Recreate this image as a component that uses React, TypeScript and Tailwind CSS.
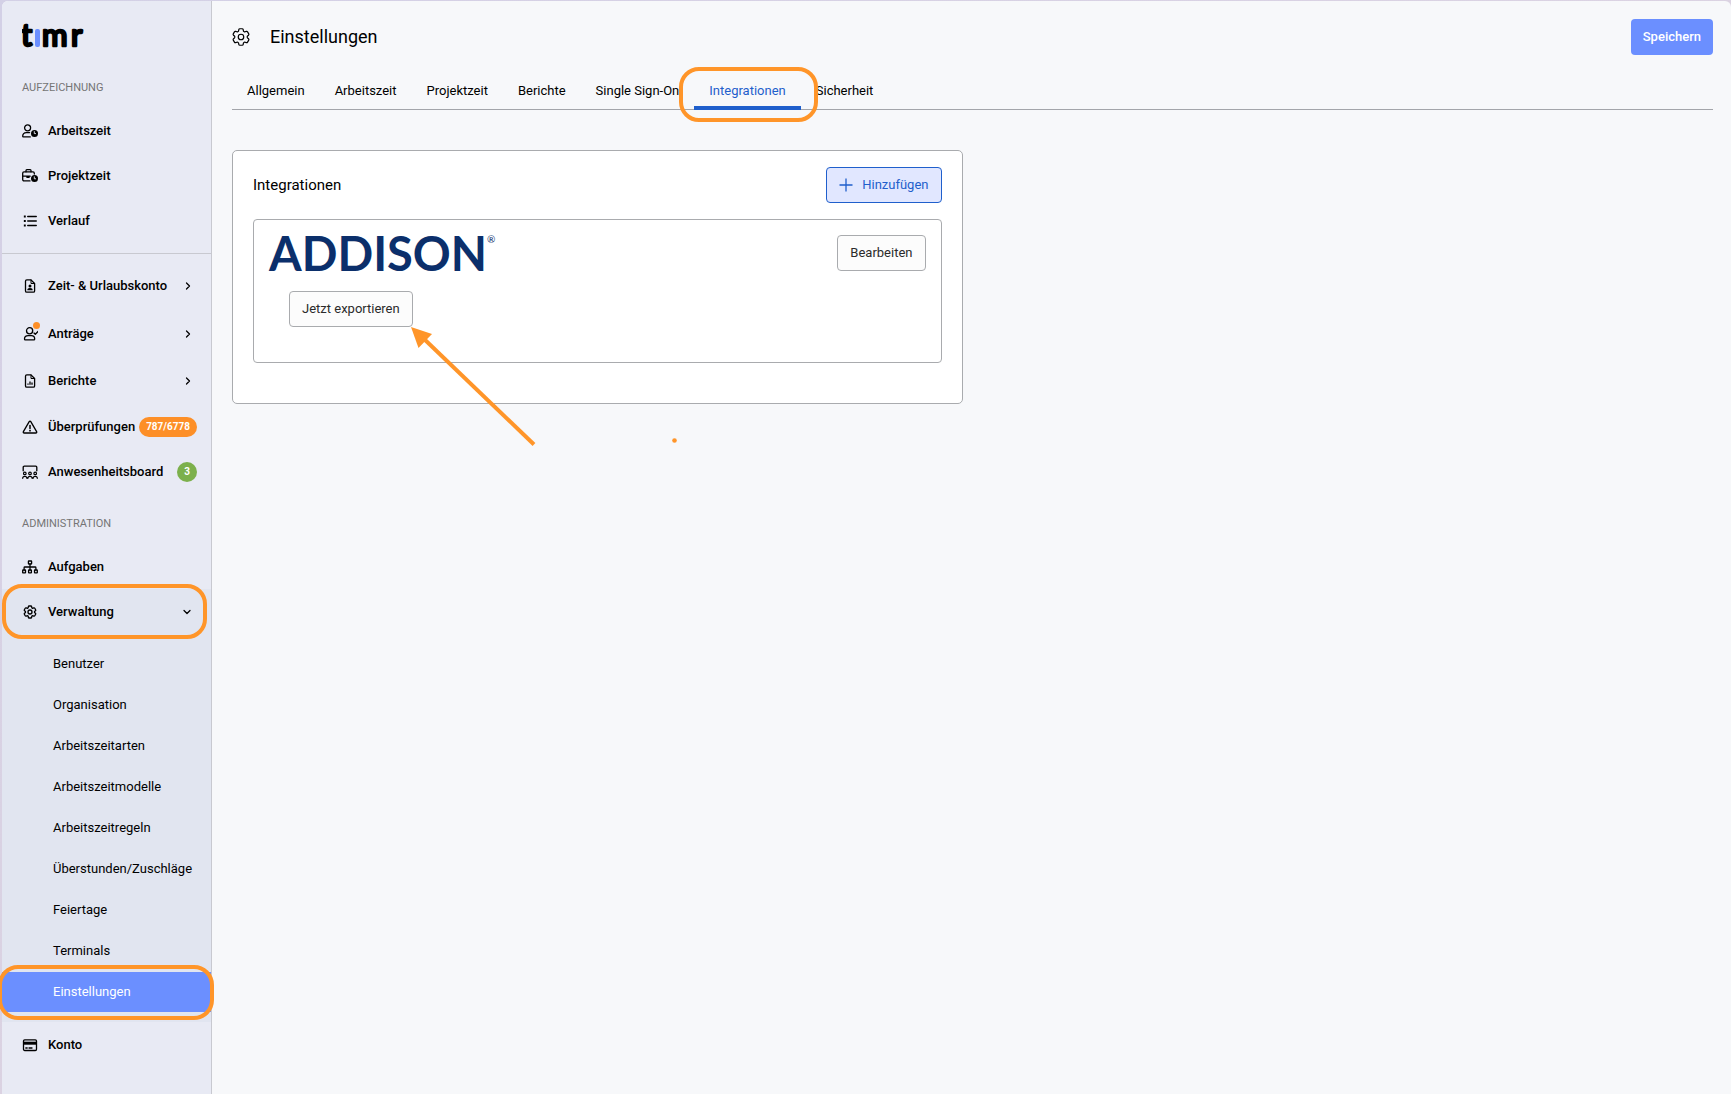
import type { ReactNode } from "react";
import { HiOutlineCog6Tooth } from "react-icons/hi2";
import { ChevronDown, ChevronRight } from "lucide-react";

function Icon({ children }: { children: ReactNode }) {
  return (
    <svg
      viewBox="0 0 16 16"
      className="size-4 shrink-0"
      fill="none"
      stroke="currentColor"
      strokeWidth="1.3"
      strokeLinecap="round"
      strokeLinejoin="round"
      aria-hidden="true"
    >
      {children}
    </svg>
  );
}

const icons = {
  userClock: (
    <Icon>
      <circle cx="5.6" cy="4.8" r="3" />
      <path d="M7.6 9.6H4.2C2 9.6.7 11.2.7 13.2c0 .5.2.7.6.7h7" />
      <circle cx="12.5" cy="10.4" r="3.5" fill="currentColor" stroke="none" />
      <path d="M12.3 8.6v2h1.3" stroke="#e8eaf4" strokeWidth="0.9" />
    </Icon>
  ),
  briefcaseClock: (
    <Icon>
      <path d="M8 12.9H2c-.8 0-1.3-.5-1.3-1.3V5.2c0-.8.5-1.3 1.3-1.3h9c.8 0 1.3.5 1.3 1.3v.8" />
      <path d="M4 3.8V2.6c0-.5.4-.9.9-.9h3.2c.5 0 .9.4.9.9v1.2M.8 8.2h7.4M5 8.2v1.2h2V8.2" />
      <circle cx="12.5" cy="10.6" r="3.5" fill="currentColor" stroke="none" />
      <path d="M12.3 8.8v2h1.3" stroke="#e8eaf4" strokeWidth="0.9" />
    </Icon>
  ),
  list: (
    <Icon>
      <path d="M5.7 3.5h8.6M5.7 8h8.6M5.7 12.5h8.6" />
      <path d="M2.8 3.5h.01M2.8 8h.01M2.8 12.5h.01" strokeWidth="1.9" strokeLinecap="square" />
    </Icon>
  ),
  fileUser: (
    <Icon>
      <path d="M9 1.9H4.8c-.8 0-1.3.5-1.3 1.3v9.7c0 .8.5 1.3 1.3 1.3h6.5c.8 0 1.3-.5 1.3-1.3V5.5z" />
      <path d="M9 2v3.5h3.4" strokeWidth="1" />
      <circle cx="8" cy="7.9" r="1.5" fill="currentColor" stroke="none" />
      <path d="M5.3 12.3c0-1.6.9-2.4 2.7-2.4s2.7.8 2.7 2.4z" fill="currentColor" stroke="none" />
    </Icon>
  ),
  userCheck: (
    <Icon>
      <circle cx="7.6" cy="4.8" r="3.1" />
      <path d="M9.4 9.7H6.2c-2.2 0-3.7 1.3-3.7 3.3 0 .6.3.9.8.9h8.6c.5 0 .8-.3.8-.9 0-2-1.3-3.3-3.3-3.3z" />
      <path d="m12 7.1 1.3 1.2 3-3" strokeWidth="1.4" />
    </Icon>
  ),
  fileChart: (
    <Icon>
      <path d="M9 1.9H4.8c-.8 0-1.3.5-1.3 1.3v9.7c0 .8.5 1.3 1.3 1.3h6.5c.8 0 1.3-.5 1.3-1.3V5.5z" />
      <path d="M9 2v3.5h3.4" strokeWidth="1" />
      <path d="M6 11.8v-1.2M8 11.8V8.4M10 11.8V9.5" strokeLinecap="butt" />
    </Icon>
  ),
  warning: (
    <Icon>
      <path d="M7.2 2.7 1.4 12.6c-.4.7 0 1.4.8 1.4h11.6c.8 0 1.2-.7.8-1.4L8.8 2.7c-.4-.6-1.2-.6-1.6 0z" />
      <path d="M8 6.4v3.2" strokeWidth="1.5" />
      <path d="M8 11.7h.01" strokeWidth="1.8" />
    </Icon>
  ),
  board: (
    <Icon>
      <path d="M1.2 6.8V3.3c0-.7.4-1.1 1.1-1.1h11.4c.7 0 1.1.4 1.1 1.1v3.5" />
      <circle cx="2.8" cy="9.4" r="1.3" strokeWidth="1.2" />
      <circle cx="8" cy="9.4" r="1.3" strokeWidth="1.2" />
      <circle cx="13.2" cy="9.4" r="1.3" strokeWidth="1.2" />
      <path
        d="M.7 14.3c0-1.3.8-1.9 2.1-1.9s2.1.6 2.1 1.9M5.9 14.3c0-1.3.8-1.9 2.1-1.9s2.1.6 2.1 1.9M11.1 14.3c0-1.3.8-1.9 2.1-1.9s2.1.6 2.1 1.9"
        strokeWidth="1.2"
      />
    </Icon>
  ),
  sitemap: (
    <Icon>
      <rect x="6.4" y="2" width="3.2" height="3" rx="0.4" />
      <rect x="0.7" y="11" width="2.8" height="2.8" rx="0.4" />
      <rect x="6.6" y="11" width="2.8" height="2.8" rx="0.4" />
      <rect x="12.5" y="11" width="2.8" height="2.8" rx="0.4" />
      <path d="M8 5v6M2.1 11V8.8c0-.5.3-.8.8-.8h10.2c.5 0 .8.3.8.8V11" />
    </Icon>
  ),
  gear: <HiOutlineCog6Tooth className="size-4 shrink-0" strokeWidth={2} aria-hidden="true" />,
  card: (
    <Icon>
      <rect x="1.5" y="2.9" width="13" height="10.6" rx="1.2" />
      <path d="M1.5 6.2h13" strokeWidth="3" strokeLinecap="butt" />
      <path d="M3.8 11h1.4M7 11h3" />
    </Icon>
  ),
};

function NavItem({
  icon,
  label,
  height = "h-[45px]",
  children,
}: {
  icon: ReactNode;
  label: string;
  height?: string;
  children?: ReactNode;
}) {
  return (
    <a href="#" className={`${height} flex items-center pr-[14px] pl-5 font-medium`}>
      {icon}
      <span className="ml-[10px] whitespace-nowrap">{label}</span>
      <span className="ml-auto flex items-center">{children}</span>
    </a>
  );
}

function Highlight({ className }: { className: string }) {
  return (
    <span
      aria-hidden="true"
      className={`pointer-events-none absolute z-10 rounded-[20px] border-4 border-[#ff9529] ${className}`}
    />
  );
}

function TimrLogo() {
  return (
    <svg viewBox="0 0 70 40" className="h-10 w-[70px]" role="img" aria-label="timr">
      <g
        className="font-[Lato] text-[31px] font-normal"
        stroke="#000"
        strokeWidth="2.6"
        strokeLinejoin="round"
      >
        <text x="-1" y="31">t</text>
        <text x="20" y="31">m</text>
        <text x="49" y="31">r</text>
      </g>
      <rect x="13" y="14" width="5" height="18" rx="2" fill="#6b8fff" />
    </svg>
  );
}

const adminLinks = [
  "Benutzer",
  "Organisation",
  "Arbeitszeitarten",
  "Arbeitszeitmodelle",
  "Arbeitszeitregeln",
  "Überstunden/Zuschläge",
  "Feiertage",
  "Terminals",
  "Einstellungen",
];

function Sidebar() {
  const chevron = <ChevronRight className="mr-[3px] size-3" strokeWidth={2.5} aria-hidden="true" />;

  return (
    <aside className="w-[210px] shrink-0 rounded-tl-md border-r border-[#c8c9d0] bg-[#e8eaf4]">
      <div className="flex pt-[14px] pl-5">
        <TimrLogo />
      </div>
      <nav>
        <h2 className="mt-[25px] pl-5 text-[11px] leading-4 text-[#757575]">AUFZEICHNUNG</h2>
        <div className="mt-3 border-b border-[#c8c9d0] pb-[10px]">
          <NavItem icon={icons.userClock} label="Arbeitszeit" />
          <NavItem icon={icons.briefcaseClock} label="Projektzeit" />
          <NavItem icon={icons.list} label="Verlauf" />
        </div>
        <div className="pt-2">
          <NavItem icon={icons.fileUser} label="Zeit- & Urlaubskonto" height="h-[47px]">
            {chevron}
          </NavItem>
          <NavItem
            icon={
              <span className="relative">
                {icons.userCheck}
                <span className="absolute -top-1 -right-0.5 size-[7px] rounded-full bg-[#fd8f27]" />
              </span>
            }
            label="Anträge"
            height="h-[49px]"
          >
            {chevron}
          </NavItem>
          <NavItem icon={icons.fileChart} label="Berichte" height="h-[46px]">
            {chevron}
          </NavItem>
          <NavItem icon={icons.warning} label="Überprüfungen">
            <span className="h-5 rounded-full bg-[#fd8f27] px-[7px] text-[10px] leading-5 font-bold text-white">
              787/6778
            </span>
          </NavItem>
          <NavItem icon={icons.board} label="Anwesenheitsboard">
            <span className="size-5 rounded-full bg-[#7cb04c] text-center text-[10px] leading-5 font-bold text-white">
              3
            </span>
          </NavItem>
        </div>

        <h2 className="mt-[22px] mb-3 pl-5 text-[11px] leading-4 text-[#757575]">ADMINISTRATION</h2>
        <NavItem icon={icons.sitemap} label="Aufgaben" />
        <div className="bg-[#e1e5f0] pb-[10px]">
          <div className="relative">
            <NavItem icon={icons.gear} label="Verwaltung">
              <ChevronDown className="mr-1 size-3" strokeWidth={2.5} aria-hidden="true" />
            </NavItem>
            <Highlight className="-top-[5px] right-1 -bottom-[5px] left-0" />
          </div>
          <ul className="pt-[9px]">
            {adminLinks.map((label) => {
              const active = label === "Einstellungen";
              return (
                <li key={label} className="relative pt-px">
                  <a
                    href="#"
                    aria-current={active ? "page" : undefined}
                    className={`block pl-[51px] leading-10 ${active ? "bg-[#6b8fff] text-white" : ""}`}
                  >
                    {label}
                  </a>
                  {active && <Highlight className="-top-[6px] -right-[3px] -bottom-2 -left-1" />}
                </li>
              );
            })}
          </ul>
        </div>
        <NavItem icon={icons.card} label="Konto" />
      </nav>
    </aside>
  );
}

const tabs = [
  "Allgemein",
  "Arbeitszeit",
  "Projektzeit",
  "Berichte",
  "Single Sign-On",
  "Integrationen",
  "Sicherheit",
];

function Tabs() {
  return (
    <nav className="mt-[17px] flex border-b border-[#a3a5aa]">
      {tabs.map((label) => {
        const active = label === "Integrationen";
        return (
          <a
            key={label}
            href="#"
            aria-current={active ? "page" : undefined}
            className={`relative -mb-px h-[38px] border-b-4 px-[15px] leading-[38px] whitespace-nowrap ${
              active ? "border-[#1f5fcc] text-[#1f5fcc]" : "border-transparent"
            }`}
          >
            {label}
            {active && <Highlight className="-top-[5px] -right-[17px] -bottom-4 -left-[15px]" />}
          </a>
        );
      })}
    </nav>
  );
}

function ExportArrow() {
  return (
    <svg
      viewBox="0 0 128 120"
      className="pointer-events-none absolute top-full left-full -ml-[2px] h-[120px] w-32 overflow-visible"
      aria-hidden="true"
    >
      <path d="M0 0 21 7 7.5 21z" fill="#ff9529" />
      <path d="M11 10 123 117.5" stroke="#ff9529" strokeWidth="4" />
      <circle cx="263.5" cy="113.5" r="2.3" fill="#ff9529" />
    </svg>
  );
}

function IntegrationsCard() {
  return (
    <section className="rounded-[5px] border border-[#a9abae] bg-white px-5 pt-4 pb-10">
      <div className="flex items-center justify-between">
        <h2 className="text-[15px] leading-5">Integrationen</h2>
        <button
          type="button"
          className="flex h-9 items-center rounded border border-[#1f5fcc] bg-[#e1e7ff] px-3 text-[#1f5fcc]"
        >
          <svg viewBox="0 0 14 14" className="mr-[9px] size-[14px]" stroke="currentColor" strokeWidth="1.3" aria-hidden="true">
            <path d="M7 .5v13M.5 7h13" />
          </svg>
          Hinzufügen
        </button>
      </div>

      <article className="mt-4 h-36 rounded border border-[#a9abae] px-[15px] pt-[15px]">
        <div className="flex h-9 items-start justify-between">
          <div className="flex items-start text-[#0b2f6b]">
            <span className="font-[Lato] text-[47px] leading-9 font-bold">ADDISON</span>
            <span className="font-[Lato] text-[10px] leading-2">®</span>
          </div>
          <button type="button" className="h-9 rounded border border-[#a9abae] bg-[#fcfcfc] px-3 text-[#2b2b2b]">
            Bearbeiten
          </button>
        </div>
        <div className="relative mt-5 ml-5 w-fit">
          <button type="button" className="h-9 rounded border border-[#a9abae] bg-[#fcfcfc] px-3 text-[#2b2b2b]">
            Jetzt exportieren
          </button>
          <ExportArrow />
        </div>
      </article>
    </section>
  );
}

export default function App() {
  return (
    <div className="min-h-screen overflow-x-hidden bg-linear-to-br from-[#d3d0e6] to-[#e3d5de] pt-px pl-[2px] font-[Roboto,sans-serif] text-[13px] text-black">
      <div className="flex min-h-[calc(100vh-1px)] rounded-t-md bg-[#f7f8fa]">
        <Sidebar />
        <main className="min-w-0 flex-1 pt-[18px] pr-[18px] pl-5">
          <header className="flex h-9 items-center">
            <HiOutlineCog6Tooth className="-ml-0.5 size-[22px]" strokeWidth={1.3} aria-hidden="true" />
            <h1 className="ml-[18px] text-lg">Einstellungen</h1>
            <button
              type="button"
              className="ml-auto h-9 rounded bg-[#6b8fff] px-3 font-medium text-white"
            >
              Speichern
            </button>
          </header>
          <Tabs />
          <div className="mt-10 grid grid-cols-2 gap-5">
            <IntegrationsCard />
          </div>
        </main>
      </div>
    </div>
  );
}
